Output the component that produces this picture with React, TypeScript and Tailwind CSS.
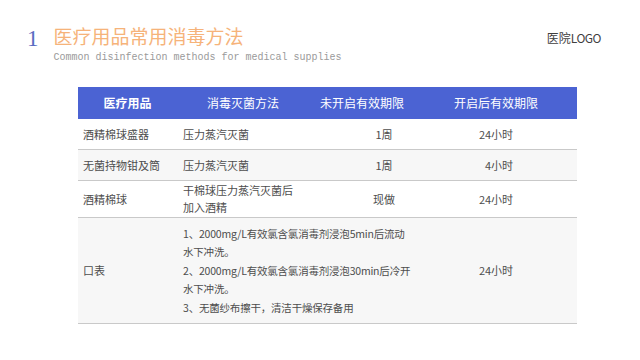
const cjk = "font-['Noto_Sans_CJK_SC',sans-serif]";

function Row({
  name,
  method,
  closed,
  opened,
  className = "",
}: {
  name: React.ReactNode;
  method: React.ReactNode;
  closed: React.ReactNode;
  opened: React.ReactNode;
  className?: string;
}) {
  return (
    <div
      className={`grid grid-cols-[99px_132px_106px_162px] items-center border-b border-[#c9c9c9] text-[11px] text-[#4d4d4d] ${className}`}
    >
      <div className="pl-[5px]">{name}</div>
      <div className="pl-[6px] leading-[17px]">{method}</div>
      <div className="pl-[44px] text-center">{closed}</div>
      <div className="text-center">{opened}</div>
    </div>
  );
}

export default function App() {
  return (
    <main className={`h-[360px] w-[640px] overflow-hidden bg-white ${cjk}`}>
      <header className="flex items-start justify-between pt-[26px]">
        <div className="flex items-start pl-[27px]">
          <span className="pt-[1px] font-['Liberation_Serif',serif] text-[23px] leading-none text-[#5a6cc2]">
            1
          </span>
          <div className="ml-[15px] flex flex-col">
            <h1 className="text-[19px] leading-[19px] text-[#f6b37a]">
              医疗用品常用消毒方法
            </h1>
            <p className="mt-[8px] font-['Liberation_Mono',monospace] text-[10px] leading-[10px] text-[#9a9a9a]">
              Common disinfection methods for medical supplies
            </p>
          </div>
        </div>
        <div className="pr-[39px] pt-[6px] text-[12px] leading-[12px] text-[#3f3f3f]">
          医院<span className="tracking-[-0.5px]">LOGO</span>
        </div>
      </header>

      <section className="ml-[78px] mt-[24px] w-[499px]">
        <div className="grid h-[32px] grid-cols-[99px_132px_106px_162px] items-center bg-[#4b63d3] text-center text-[12px] text-white">
          <div className="font-bold">医疗用品</div>
          <div>消毒灭菌方法</div>
          <div>未开启有效期限</div>
          <div>开启后有效期限</div>
        </div>

        <Row
          className="h-[31px]"
          name="酒精棉球盛器"
          method="压力蒸汽灭菌"
          closed="1周"
          opened="24小时"
        />
        <Row
          className="h-[31px] bg-[#f7f7f7]"
          name="无菌持物钳及筒"
          method="压力蒸汽灭菌"
          closed="1周"
          opened={
            <>
              <span className="invisible">2</span>4小时
            </>
          }
        />
        <Row
          className="h-[37px]"
          name="酒精棉球"
          method={
            <>
              干棉球压力蒸汽灭菌后
              <br />
              加入酒精
            </>
          }
          closed="现做"
          opened="24小时"
        />

        <div className="grid h-[106px] grid-cols-[99px_238px_162px] items-center border-b border-[#c9c9c9] bg-[#f7f7f7] text-[11px] text-[#4d4d4d]">
          <div className="pl-[5px]">口表</div>
          <div className="flex flex-col gap-[1px] whitespace-nowrap pl-[6px] text-[10.5px] leading-[18px] tracking-[-0.2px]">
            <p>
              1、2000mg/L有效氯含氯消毒剂浸泡5min后流动
              <br />
              水下冲洗。
            </p>
            <p>
              2、2000mg/L有效氯含氯消毒剂浸泡30min后冷开
              <br />
              水下冲洗。
            </p>
            <p>3、无菌纱布擦干，清洁干燥保存备用</p>
          </div>
          <div className="text-center">24小时</div>
        </div>
      </section>
    </main>
  );
}
